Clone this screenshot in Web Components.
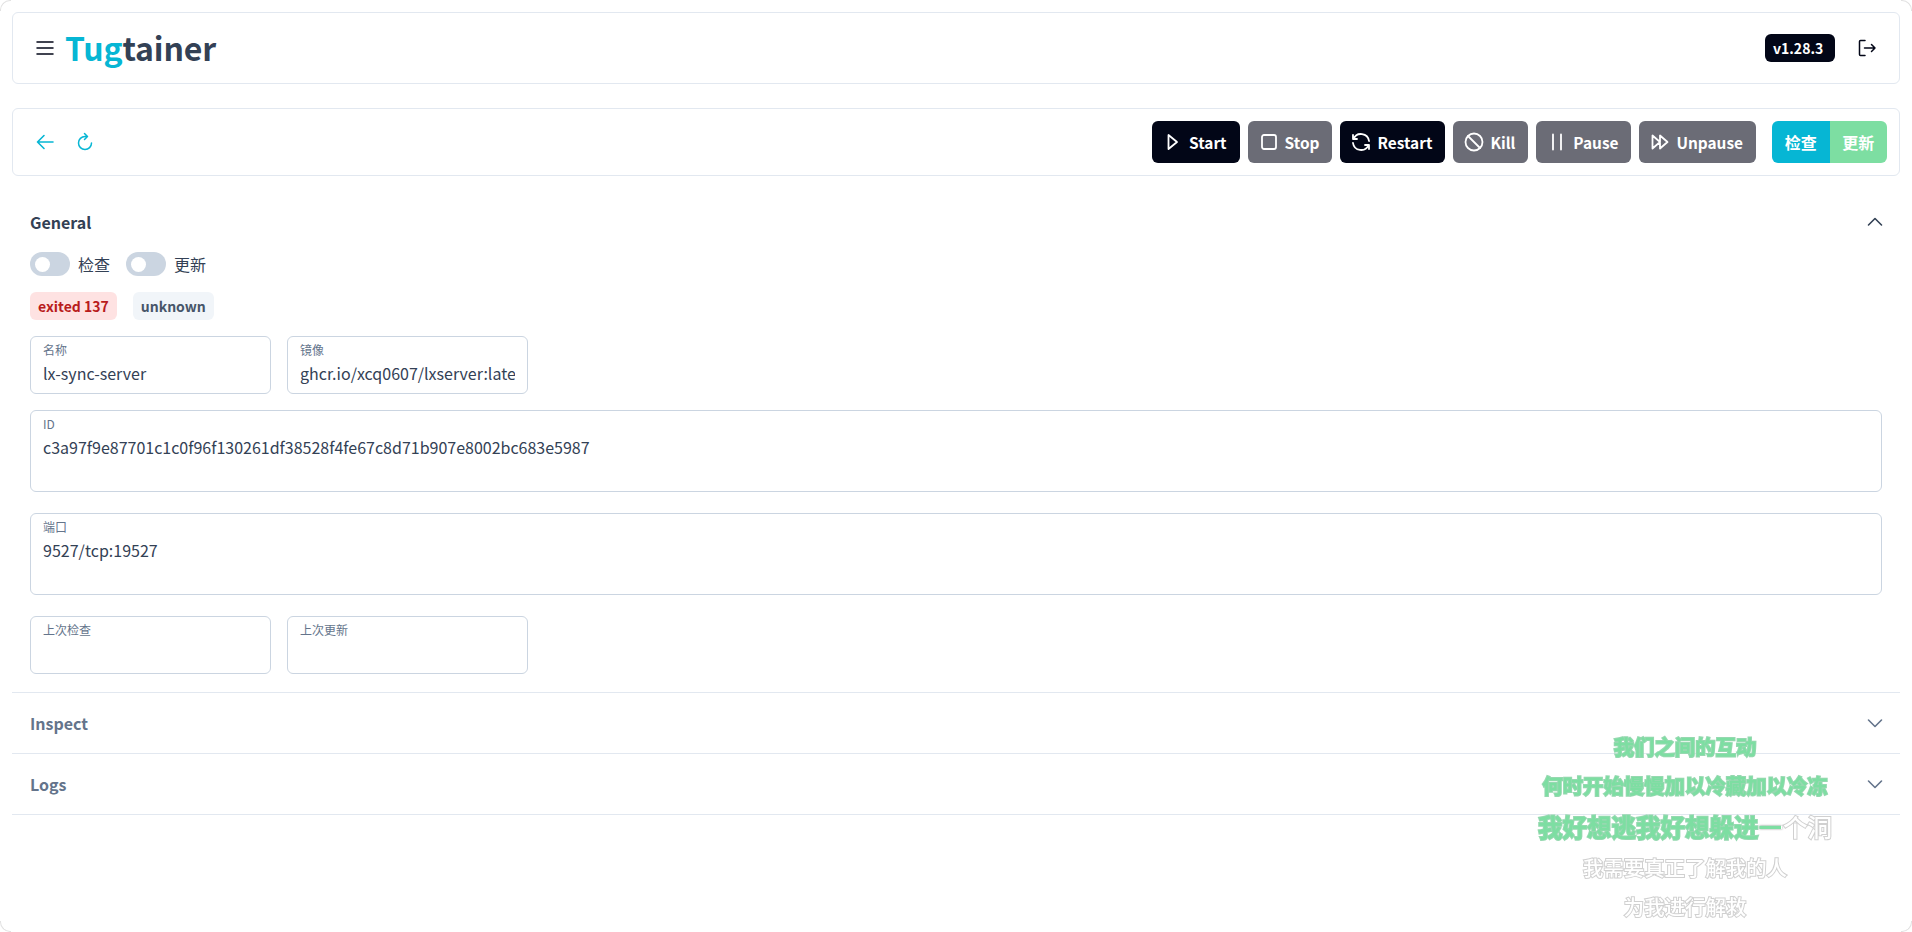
<!DOCTYPE html>
<html lang="zh">
<head>
<meta charset="utf-8">
<title>Tugtainer</title>
<style>
    html, body {
        margin: 0;
        height: 100%;
        background: #fff;
        overflow: hidden;
    }
    body {
        font-family: "Noto Sans CJK SC", "Noto Sans", sans-serif;
        color: #334155;
        font-size: 16px;
    }
    main {
        display: flex;
        flex-direction: column;
        padding: 12px 12px 0;
    }
</style>
</head>
<body>
<main>
    <app-header></app-header>
    <app-toolbar></app-toolbar>
    <app-panel title="General" open>
        <app-general></app-general>
    </app-panel>
    <app-panel title="Inspect"></app-panel>
    <app-panel title="Logs"></app-panel>
</main>
<lyric-overlay></lyric-overlay>
<window-corners></window-corners>
<script>
const ICONS = {
    menu: '<path d="M4 6h16M4 12h16M4 18h16"/>',
    logout: '<path d="M10 4.500H5.500a1 1 0 0 0-1 1v13a1 1 0 0 0 1 1H10M9.500 12H20M16.500 8.500L20 12l-3.500 3.500"/>',
    back: '<path d="M20 12H4.500M11 5.500L4.500 12l6.500 6.500"/>',
    refresh: '<path d="M18.500 13a6.500 6.500 0 1 1-6.500-6.500h2M11.500 3.500l3 3-3 3"/>',
    play: '<path d="M7.500 5v14l8.500-7z"/>',
    stop: '<rect x="5" y="5" width="14" height="14" rx="2"/>',
    restart: '<path d="M20 11a8.100 8.100 0 0 0-15.500-2M4 5v4h4M4 13a8.100 8.100 0 0 0 15.500 2M20 19v-4h-4"/>',
    ban: '<circle cx="12" cy="12" r="8.500"/><path d="M6 6l12 12"/>',
    pause: '<path d="M8 4.500v15M16 4.500v15"/>',
    unpause: '<path d="M4.500 5.500v13L12 12zM12 5.500v13l7.500-6.500z"/>',
    up: '<path d="M5.500 15l6.500-6.500 6.500 6.500"/>',
    down: '<path d="M5.500 9l6.500 6.500 6.500-6.500"/>'
};

function icon(name, width) {
    return `<svg width="24" height="24" viewBox="0 0 24 24" fill="none" stroke="currentColor"
        stroke-width="${width || 2}" stroke-linecap="round" stroke-linejoin="round">${ICONS[name]}</svg>`;
}

class AppHeader extends HTMLElement {
    constructor() {
        super();
        this.attachShadow({ mode: "open" });
        this.shadowRoot.innerHTML = `
        <style>
            :host {
                display: flex;
                align-items: center;
                height: 72px;
                box-sizing: border-box;
                padding: 0 20px;
                border: 1px solid #e2e8f0;
                border-radius: 6px;
            }
            .menu { display: flex; color: #020617; margin-right: 8px; }
            .logo {
                font-size: 32px;
                font-weight: 700;
                line-height: 1;
                letter-spacing: -0.15px;
                color: #334155;
                flex: 1;
                margin-top: -2px;
            }
            .logo span { color: #06b6d4; }
            .version {
                display: flex;
                align-items: center;
                width: 70px;
                height: 28px;
                box-sizing: border-box;
                padding-left: 8px;
                background: #020617;
                color: #fff;
                border-radius: 6px;
                font-size: 14px;
                font-weight: 700;
            }
            .logout { display: flex; color: #020617; margin-left: 20px; }
        </style>
        <div class="menu">${icon("menu", 1.500)}</div>
        <div class="logo"><span>Tug</span>tainer</div>
        <div class="version">v1.28.3</div>
        <div class="logout">${icon("logout", 1.500)}</div>`;
    }
}

class AppButton extends HTMLElement {
    constructor() {
        super();
        this.attachShadow({ mode: "open" });
        const name = this.getAttribute("icon");
        this.shadowRoot.innerHTML = `
        <style>
            :host {
                display: inline-flex;
                align-items: center;
                justify-content: center;
                gap: 4px;
                height: 42px;
                box-sizing: border-box;
                padding: 0 13px 0 9px;
                border-radius: 6px;
                font-size: 15.400px;
                font-weight: 600;
                color: #fff;
                background: #6b6c76;
            }
            :host([dark]) { background: #020617; }
            svg { display: block; }
        </style>
        ${icon(name, 1.800)}<slot></slot>`;
    }
}

class AppToolbar extends HTMLElement {
    constructor() {
        super();
        this.attachShadow({ mode: "open" });
        this.shadowRoot.innerHTML = `
        <style>
            :host {
                display: flex;
                align-items: center;
                height: 68px;
                box-sizing: border-box;
                margin: 24px 0 17px;
                padding: 0 12px 0 20px;
                border: 1px solid #e2e8f0;
                border-radius: 6px;
            }
            .nav { display: flex; gap: 16px; color: #06b6d4; flex: 1; }
            .nav svg { display: block; }
            .actions { display: flex; gap: 8px; }
            .split {
                display: flex;
                margin-left: 16px;
                height: 42px;
                border-radius: 6px;
                overflow: hidden;
                color: #fff;
                font-size: 16px;
                font-weight: 600;
            }
            .split div {
                display: flex;
                align-items: center;
                justify-content: center;
                width: 57.500px;
            }
            .check { background: #06b6d4; }
            .update { background: #7ddea2; }
        </style>
        <div class="nav">${icon("back", 1.600)}${icon("refresh", 1.500)}</div>
        <div class="actions">
            <app-button icon="play" dark>Start</app-button>
            <app-button icon="stop">Stop</app-button>
            <app-button icon="restart" dark>Restart</app-button>
            <app-button icon="ban">Kill</app-button>
            <app-button icon="pause">Pause</app-button>
            <app-button icon="unpause">Unpause</app-button>
        </div>
        <div class="split"><div class="check">检查</div><div class="update">更新</div></div>`;
    }
}

class AppPanel extends HTMLElement {
    constructor() {
        super();
        this.attachShadow({ mode: "open" });
        const open = this.hasAttribute("open");
        this.shadowRoot.innerHTML = `
        <style>
            :host {
                display: block;
                border-bottom: 1px solid #e2e8f0;
            }
            .head {
                display: flex;
                align-items: center;
                justify-content: space-between;
                height: 60px;
                box-sizing: border-box;
                padding: 0 13px ${open ? "2px" : "0"} 18px;
                font-weight: 600;
                color: ${open ? "#334155" : "#64748b"};
            }
            svg { display: block; }
        </style>
        <div class="head"><span>${this.getAttribute("title")}</span>${icon(open ? "up" : "down", 1.600)}</div>
        <slot></slot>`;
    }
}

class AppToggle extends HTMLElement {
    constructor() {
        super();
        this.attachShadow({ mode: "open" });
        this.shadowRoot.innerHTML = `
        <style>
            :host {
                display: inline-flex;
                align-items: center;
                gap: 8px;
                font-size: 16px;
                color: #334155;
            }
            .track {
                width: 40px;
                height: 24px;
                border-radius: 12px;
                background: #cbd5e1;
                display: flex;
                align-items: center;
                padding-left: 5px;
                box-sizing: border-box;
            }
            .knob {
                width: 15px;
                height: 15px;
                border-radius: 50%;
                background: #fff;
            }
        </style>
        <div class="track"><div class="knob"></div></div><slot></slot>`;
    }
}

class AppBadge extends HTMLElement {
    constructor() {
        super();
        this.attachShadow({ mode: "open" });
        this.shadowRoot.innerHTML = `
        <style>
            :host {
                display: inline-flex;
                align-items: center;
                height: 28px;
                padding: 0 8px;
                border-radius: 6px;
                font-size: 14px;
                font-weight: 700;
                background: #f1f5f9;
                color: #475569;
            }
            :host([danger]) { background: #fee2e2; color: #b91c1c; }
        </style>
        <slot></slot>`;
    }
}

class AppField extends HTMLElement {
    constructor() {
        super();
        this.attachShadow({ mode: "open" });
        this.shadowRoot.innerHTML = `
        <style>
            :host {
                display: block;
                box-sizing: border-box;
                height: 58px;
                padding: 4px 12px 0;
                border: 1px solid #cbd5e1;
                border-radius: 6px;
                overflow: hidden;
            }
            :host([wide]) { height: 82px; }
            .label {
                font-size: 12px;
                line-height: 18px;
                color: #64748b;
            }
            .value {
                margin-top: 1px;
                font-size: 16px;
                line-height: 27px;
                color: #334155;
                white-space: nowrap;
                overflow: hidden;
            }
        </style>
        <div class="label">${this.getAttribute("label")}</div>
        <div class="value"><slot></slot></div>`;
    }
}

class AppGeneral extends HTMLElement {
    constructor() {
        super();
        this.attachShadow({ mode: "open" });
        this.shadowRoot.innerHTML = `
        <style>
            :host {
                display: flex;
                flex-direction: column;
                padding: 0 18px 18px;
            }
            .row { display: flex; gap: 16px; }
            .toggles { margin-top: -1px; }
            .badges { margin-top: 16px; }
            .fields { margin-top: 16px; display: grid; grid-template-columns: 241px 241px; gap: 16px; }
            app-field[wide] { margin-top: 16px; }
            .fields.last { margin-top: 21px; }
        </style>
        <div class="row toggles"><app-toggle>检查</app-toggle><app-toggle>更新</app-toggle></div>
        <div class="row badges"><app-badge danger>exited 137</app-badge><app-badge>unknown</app-badge></div>
        <div class="fields">
            <app-field label="名称">lx-sync-server</app-field>
            <app-field label="镜像">ghcr.io/xcq0607/lxserver:late</app-field>
        </div>
        <app-field wide label="ID">c3a97f9e87701c1c0f96f130261df38528f4fe67c8d71b907e8002bc683e5987</app-field>
        <app-field wide label="端口" style="margin-top:21px">9527/tcp:19527</app-field>
        <div class="fields last">
            <app-field label="上次检查"></app-field>
            <app-field label="上次更新"></app-field>
        </div>`;
    }
}

class LyricOverlay extends HTMLElement {
    constructor() {
        super();
        this.attachShadow({ mode: "open" });
        this.shadowRoot.innerHTML = `
        <style>
            :host {
                position: fixed;
                left: 1485px;
                top: 727px;
                width: 400px;
                display: flex;
                flex-direction: column;
                align-items: center;
                font-size: 20.400px;
                font-weight: 700;
                line-height: 39px;
                color: #fff;
                paint-order: stroke fill;
            }
            .sung { color: #7ddea2; -webkit-text-stroke: 2px #96d8b0; }
            .big { font-size: 24.500px; line-height: 43px; }
            .rest { font-weight: 500; -webkit-text-stroke: 2px #d0d0d0; }
            .part {
                background: linear-gradient(90deg, #7ddea2 92%, #fff 92%);
                -webkit-background-clip: text;
                background-clip: text;
                color: transparent;
                filter: drop-shadow(0 0 1px #999);
            }
        </style>
        <div class="sung">我们之间的互动</div>
        <div class="sung">何时开始慢慢加以冷藏加以冷冻</div>
        <div class="big"><span class="sung">我好想逃我好想躲进</span><span class="part">一</span><span class="rest">个洞</span></div>
        <div class="rest">我需要真正了解我的人</div>
        <div class="rest">为我进行解救</div>`;
    }
}

// faint rounded edge of the desktop window, only visible in the corners
class WindowCorners extends HTMLElement {
    constructor() {
        super();
        this.attachShadow({ mode: "open" });
        this.shadowRoot.innerHTML = `
        <style>
            :host {
                position: fixed;
                inset: 0;
                pointer-events: none;
            }
            i {
                position: absolute;
                width: 10px;
                height: 10px;
                border: 0 solid #e2e2e2;
            }
            .tl { left: 0; top: 0; border-width: 1px 0 0 1px; border-top-left-radius: 10px; }
            .tr { right: 0; top: 0; border-width: 1px 1px 0 0; border-top-right-radius: 10px; }
            .bl { left: 0; bottom: 0; border-width: 0 0 1px 1px; border-bottom-left-radius: 10px; }
            .br { right: 0; bottom: 0; border-width: 0 1px 1px 0; border-bottom-right-radius: 10px; }
        </style>
        <i class="tl"></i><i class="tr"></i><i class="bl"></i><i class="br"></i>`;
    }
}

window.customElements.define("app-header", AppHeader);
window.customElements.define("app-button", AppButton);
window.customElements.define("app-toolbar", AppToolbar);
window.customElements.define("app-panel", AppPanel);
window.customElements.define("app-toggle", AppToggle);
window.customElements.define("app-badge", AppBadge);
window.customElements.define("app-field", AppField);
window.customElements.define("app-general", AppGeneral);
window.customElements.define("lyric-overlay", LyricOverlay);
window.customElements.define("window-corners", WindowCorners);
</script>
</body>
</html>
